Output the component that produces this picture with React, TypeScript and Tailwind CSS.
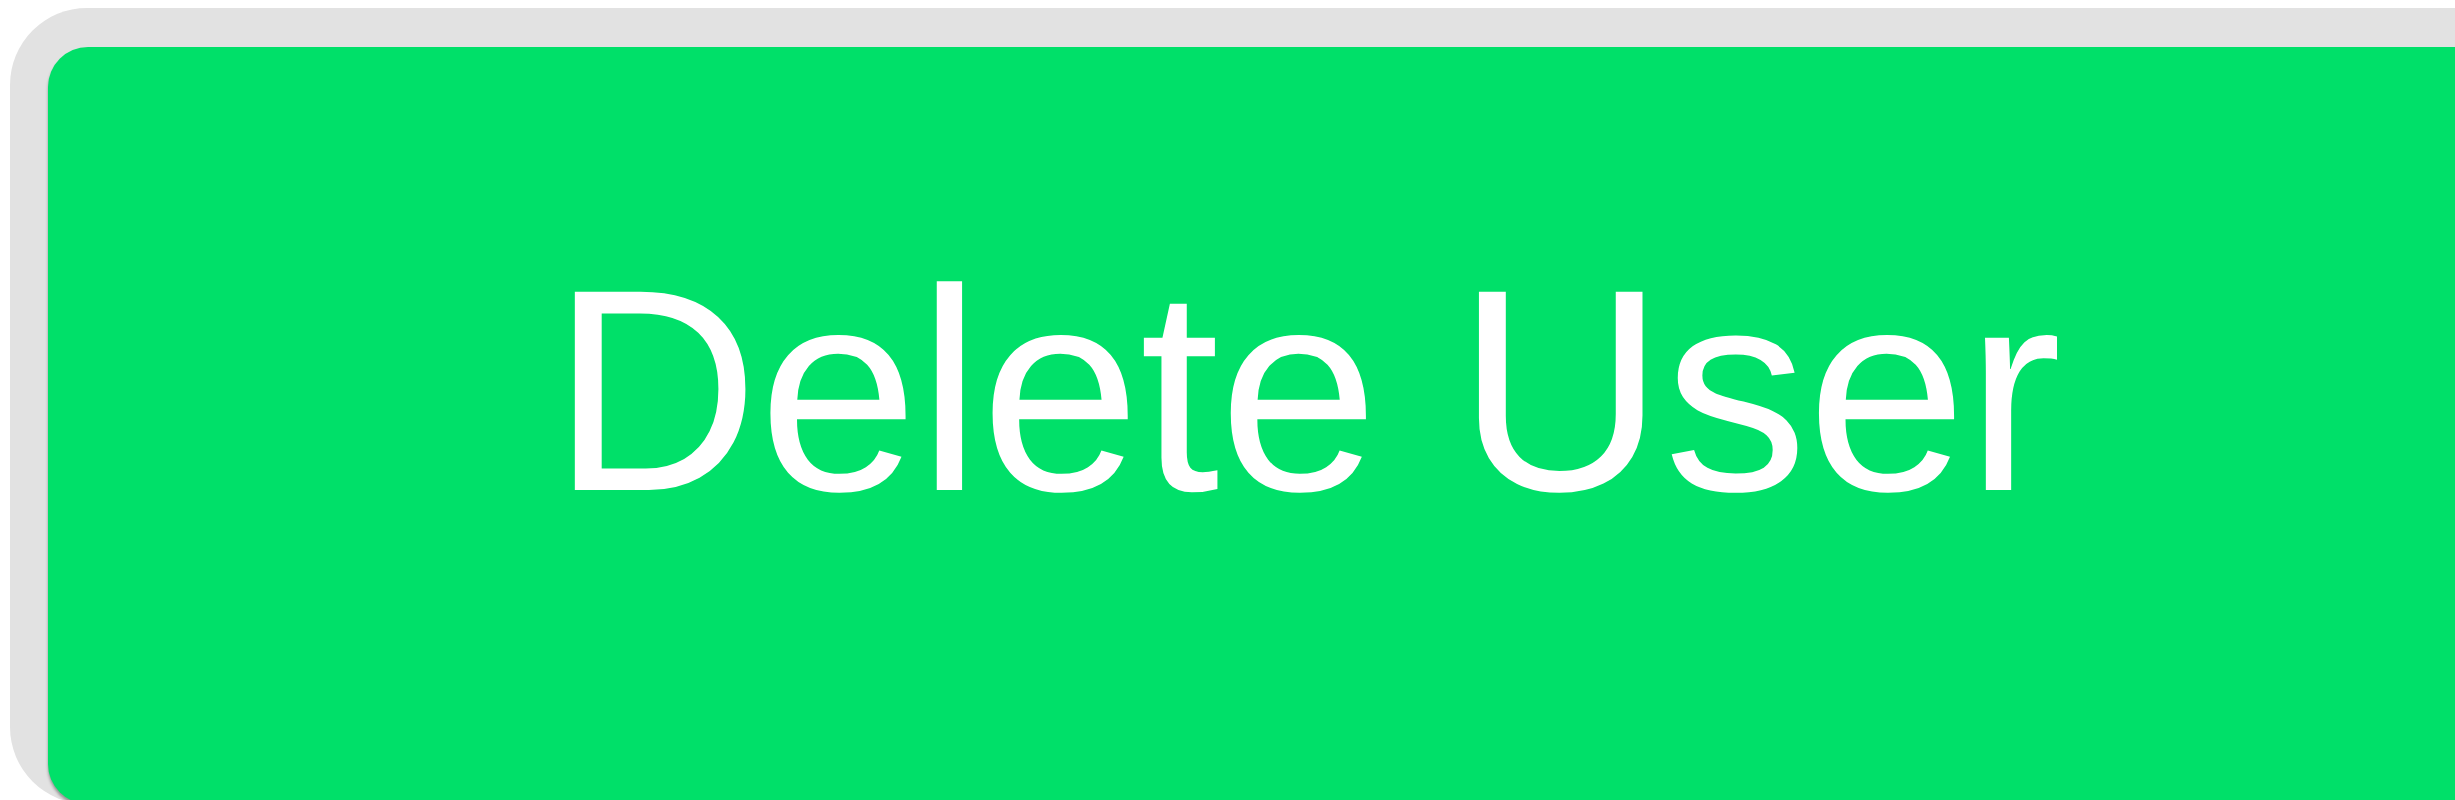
// Oversized "Delete User" action button inside its grey focus frame
export default function App() {
  return (
    <div className="h-[800px] w-full overflow-hidden bg-white font-['Liberation_Sans',Arial,sans-serif]">
      <div className="ml-[10px] mt-[8px] w-max rounded-[77px] bg-[#e2e2e2] pl-[38px] pt-[39px]">
        <button
          type="button"
          className="flex h-[757px] w-[2516px] justify-center rounded-[40px] bg-[#00e069] pt-[198px] shadow-[0_3px_3px_rgba(0,0,0,0.35)]"
        >
          <span className="block text-[288px] leading-[290px] tracking-[-1px] text-white">Delete User</span>
        </button>
      </div>
    </div>
  );
}
